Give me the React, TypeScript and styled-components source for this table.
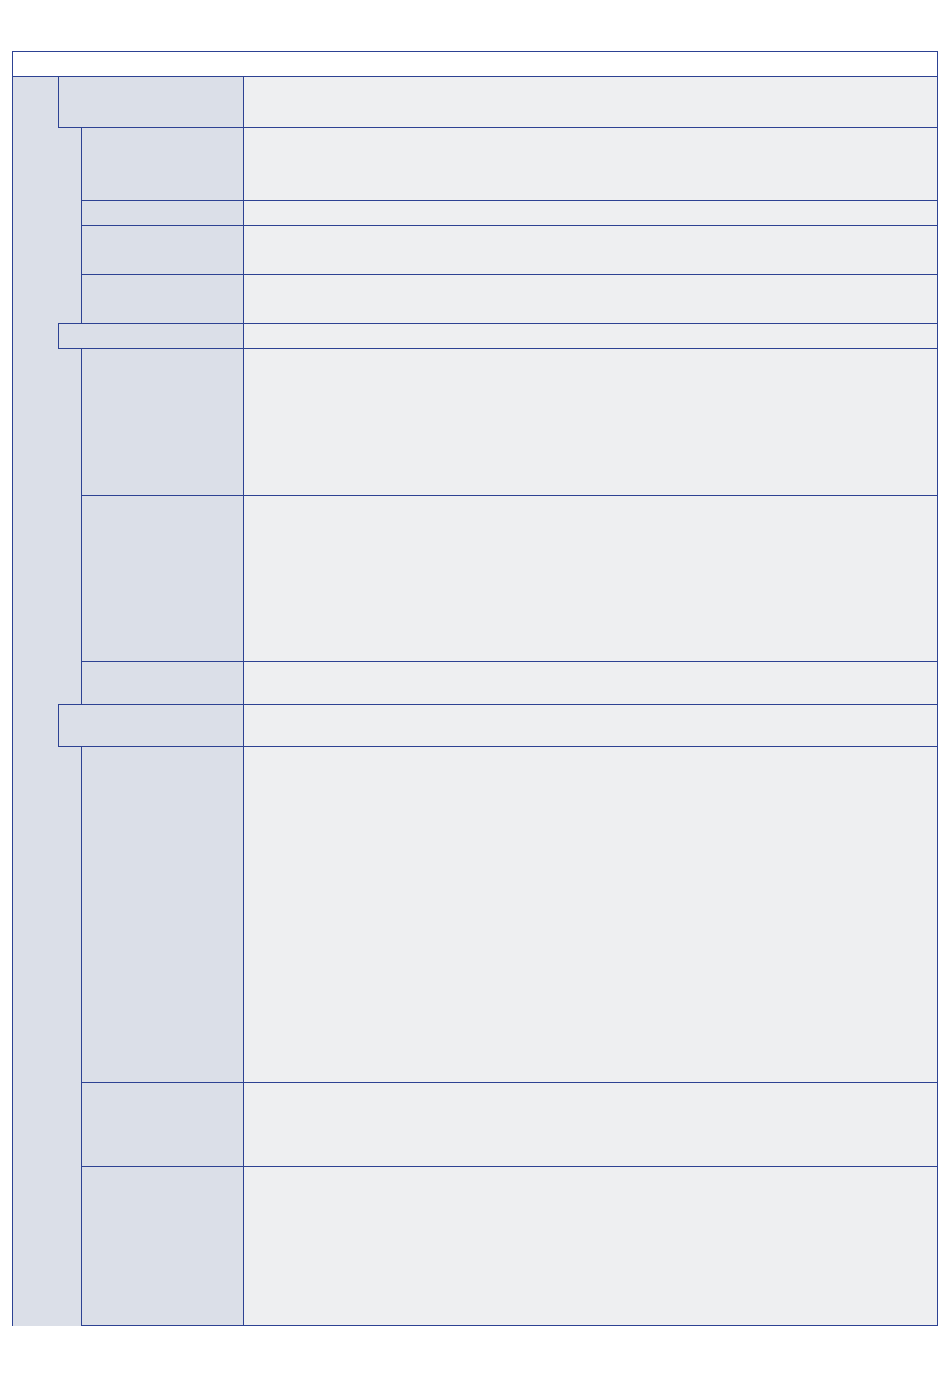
import styled, { createGlobalStyle } from "styled-components";

const GlobalStyle = createGlobalStyle`
  body {
    margin: 0;
    background: #ffffff;
    font-family: "Liberation Sans", Arial, sans-serif;
  }
`;

const sections = [
  { height: 51, rows: [73, 25, 49, 49] },
  { height: 25, rows: [147, 166, 43] },
  { height: 42, rows: [336, 84, 159] },
];

const totalRows = sections.reduce((n, s) => n + 1 + s.rows.length, 0);

export default function App() {
  return (
    <Page>
      <GlobalStyle />
      <Grid>
        <colgroup>
          <col style={{ width: 46 }} />
          <col style={{ width: 23 }} />
          <col style={{ width: 162 }} />
          <col style={{ width: 694 }} />
        </colgroup>
        <tbody>
          <Row $h={25}>
            <HeadCell colSpan={4} />
          </Row>
          {sections.map((section, i) => (
            <SectionRows key={i} section={section} first={i === 0} />
          ))}
        </tbody>
      </Grid>
    </Page>
  );
}

function SectionRows({
  section,
  first,
}: {
  section: { height: number; rows: number[] };
  first: boolean;
}) {
  return (
    <>
      <Row $h={section.height}>
        {first && <SideCell rowSpan={totalRows} />}
        <SectionCell colSpan={2} />
        <ValueCell />
      </Row>
      {section.rows.map((h, j) => (
        <Row key={j} $h={h}>
          {j === 0 && <GapCell rowSpan={section.rows.length} />}
          <LabelCell />
          <ValueCell />
        </Row>
      ))}
    </>
  );
}

const Page = styled.div`
  padding: 51px 12px 72px 12px;
`;

const Grid = styled.table`
  border-collapse: collapse;
  table-layout: fixed;
  width: 926px;
`;

const Row = styled.tr<{ $h: number }>`
  height: ${(p) => p.$h}px;
`;

const line = "1px solid #2d4293";

const HeadCell = styled.td`
  border: ${line};
  background: #ffffff;
  padding: 0;
`;

const SideCell = styled.td`
  border-left: ${line};
  border-right: none;
  border-bottom: none;
  background: #dbdfe8;
  padding: 0;
`;

const SectionCell = styled.td`
  border: ${line};
  background: #dbdfe8;
  padding: 0;
`;

const GapCell = styled.td`
  border: none;
  background: #dbdfe8;
  padding: 0;
`;

const LabelCell = styled.td`
  border: ${line};
  background: #dbdfe8;
  padding: 0;
`;

const ValueCell = styled.td`
  border: ${line};
  background: #eeeff1;
  padding: 0;
`;
